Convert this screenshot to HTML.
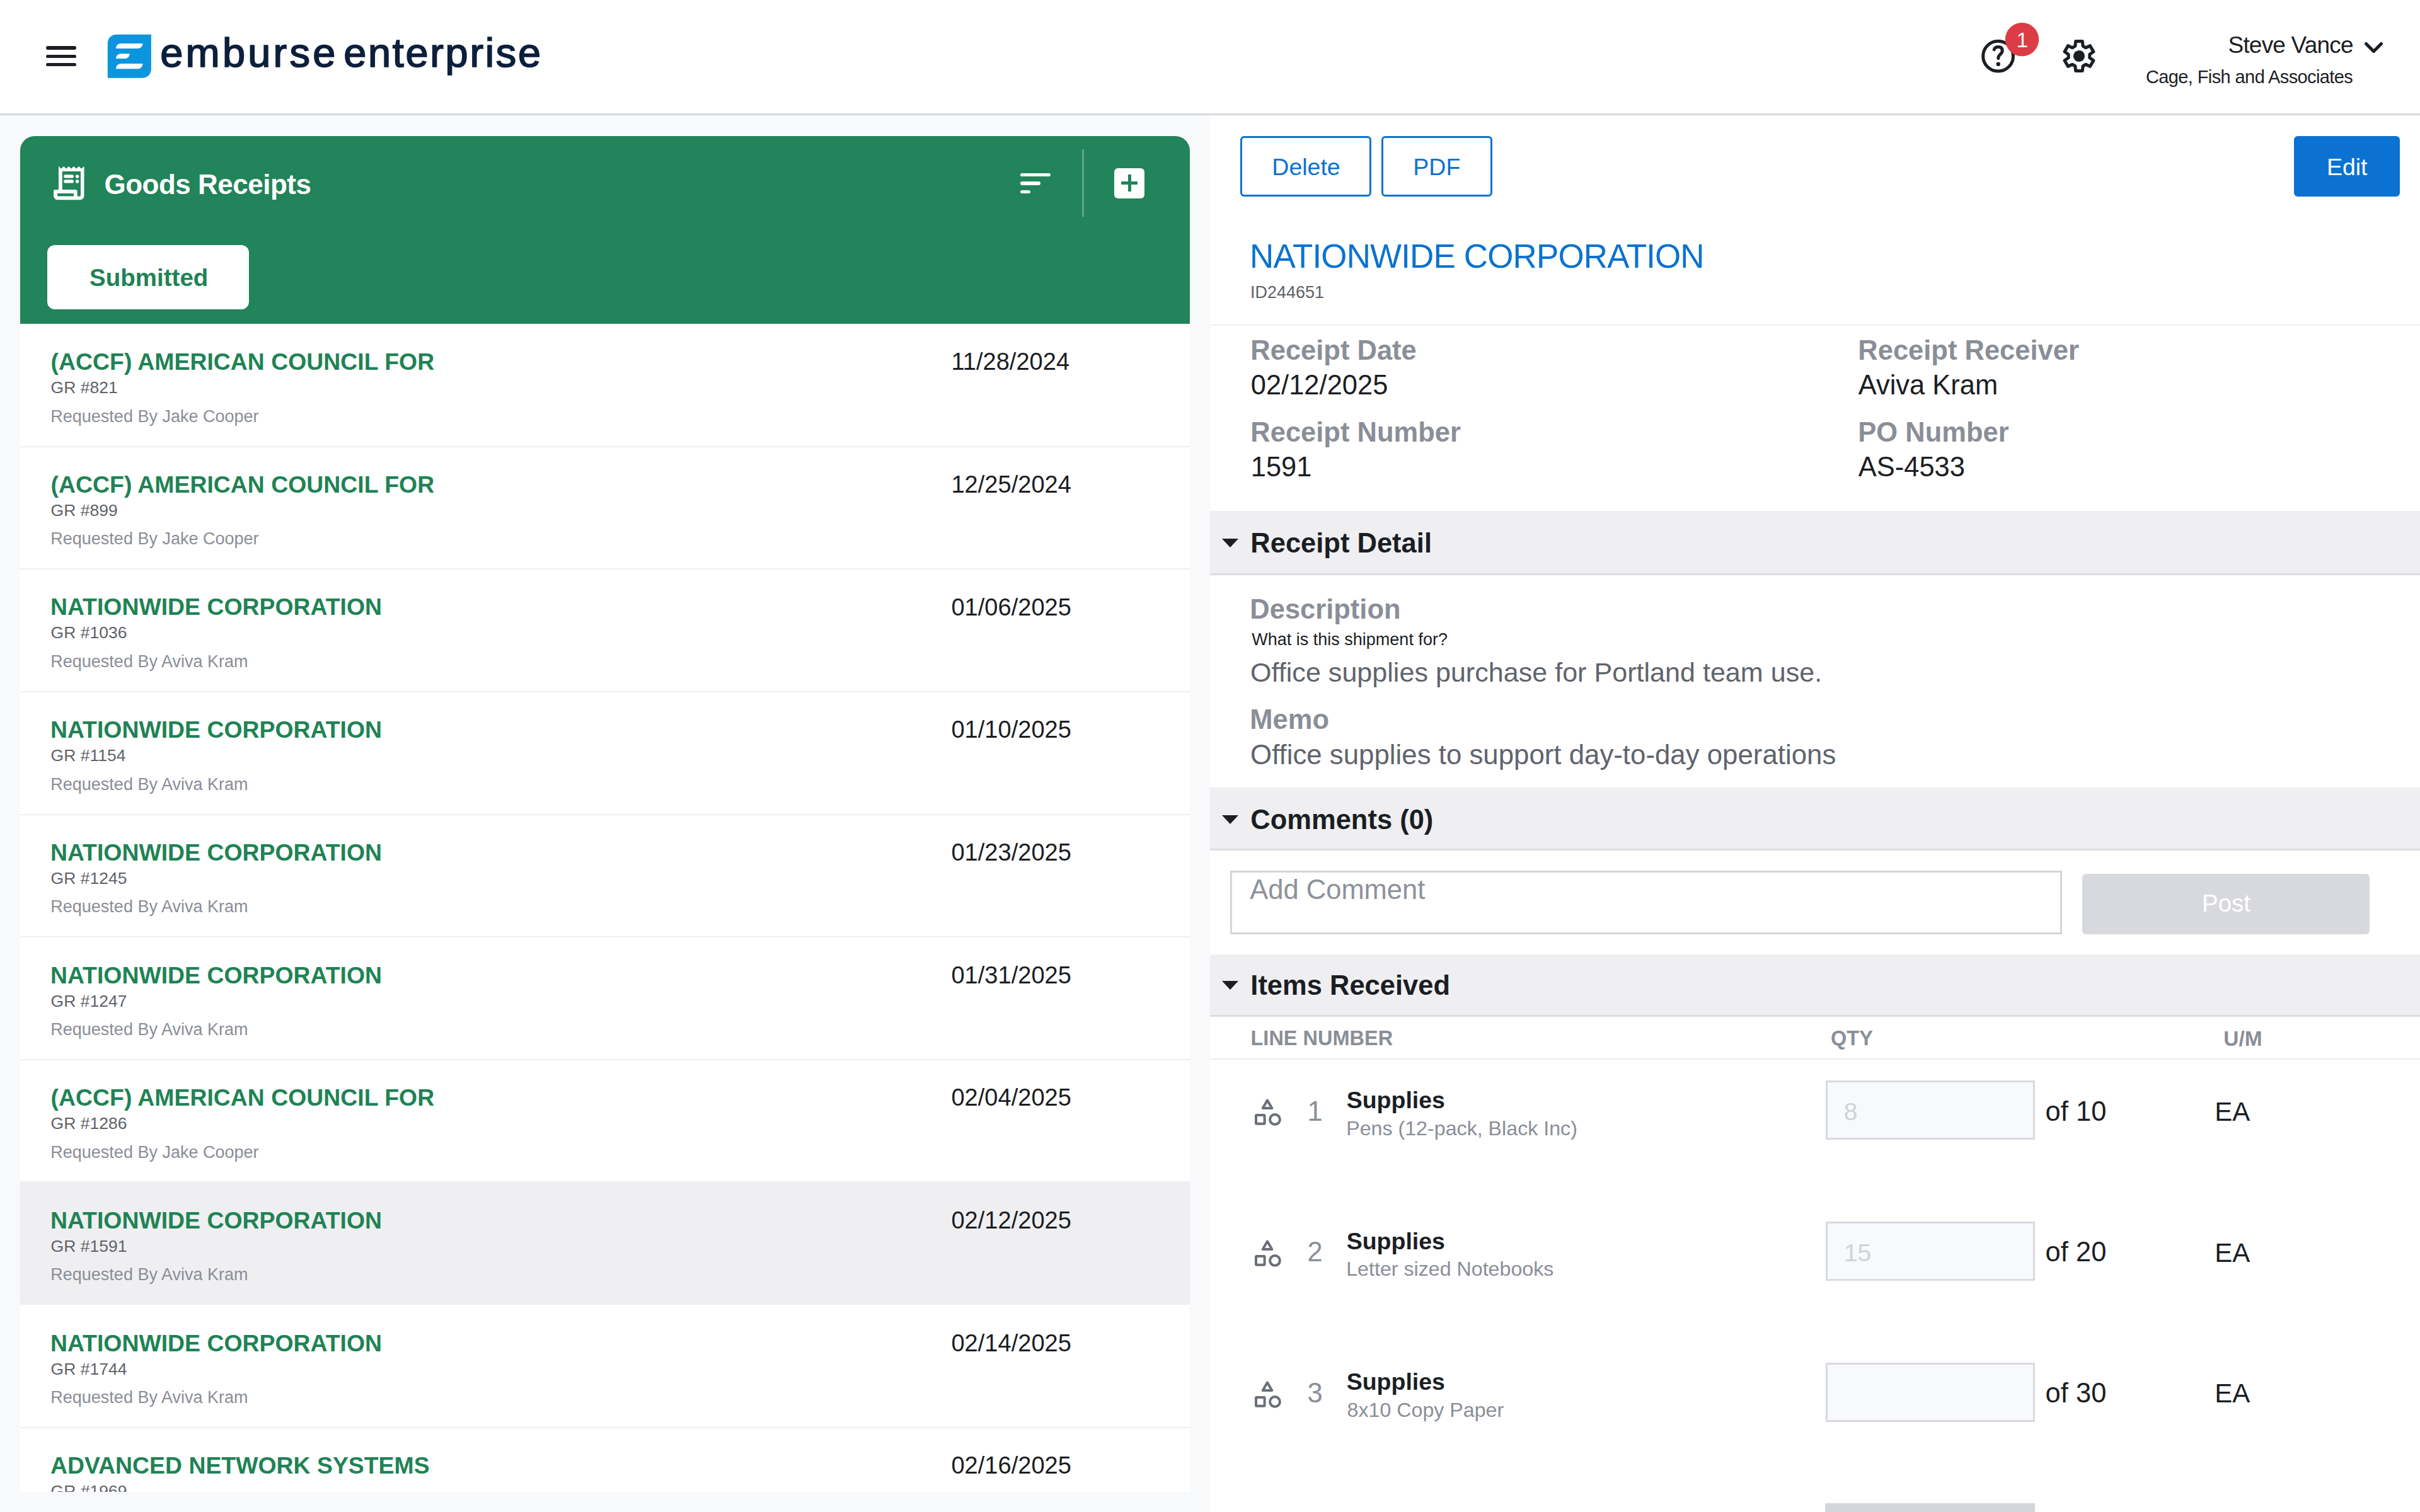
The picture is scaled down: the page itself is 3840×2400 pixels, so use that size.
<!DOCTYPE html>
<html><head><meta charset="utf-8"><title>Goods Receipts</title><style>
html,body{margin:0;padding:0}
body{width:3840px;height:2400px;position:relative;overflow:hidden;background:#f8f9fb;font-family:"Liberation Sans",sans-serif}
.t{position:absolute;line-height:1;white-space:nowrap}
#hdr{position:absolute;left:0;top:0;width:3840px;height:180px;background:#fff;border-bottom:3px solid #d7d9de}
.ham{position:absolute;left:73.3px;width:48px;height:5.3px;border-radius:3px;background:#1b1e23}
#green{position:absolute;left:32px;top:216px;width:1856px;height:298.6px;background:#21845a;border-radius:23px 23px 0 0}
.fl{position:absolute;height:5.6px;border-radius:3px;background:#fff}
#subbtn{position:absolute;left:74.6px;top:389px;width:320px;height:101.6px;border-radius:12px;background:#fff}
#list{position:absolute;left:32px;top:514px;width:1856px;height:1854px;background:#fff;overflow:hidden}
.sep{position:absolute;left:0;width:1856px;height:2px;background:#eeeff1}
#right{position:absolute;left:1920px;top:183px;width:1920px;height:2217px;background:#fff}
.obtn{position:absolute;top:216px;height:96px;box-sizing:border-box;border:3px solid #0b72d1;border-radius:6px}
.sec{position:absolute;left:1920px;width:1920px;box-sizing:border-box;background:#efeff2;border-bottom:3px solid #dcdde2}
.inp{position:absolute;left:2896.6px;width:332px;height:94.2px;box-sizing:border-box;border:3px solid #d9dadf;background:#f8f9fb}
</style></head>
<body>
<div id="hdr"></div><div class="ham" style="top:73.3px"></div><div class="ham" style="top:86.8px"></div><div class="ham" style="top:100.0px"></div><svg style="position:absolute;left:170px;top:54px" width="71" height="71" viewBox="0 0 71 71">
<path d="M0.8,15.5 C0.8,6.5 6.5,0.8 15.5,0.8 H69.9 V55 C69.9,64 64,69.8 55,69.8 H0.8 Z" fill="#0c95de"/>
<path d="M14,23 C14,18.2 17.4,15 22.4,15 H56.4 C56.4,19.6 53,23 48.4,23 Z" fill="#fff"/>
<path d="M14,39.1 C14,34.4 17.4,31.2 22.4,31.2 H35.7 C35.7,35.7 32.3,39.1 27.8,39.1 Z" fill="#fff"/>
<path d="M14,55.3 C14,50.4 17.4,47 22.4,47 H56.4 C56.4,51.7 53,55.3 48.4,55.3 Z" fill="#fff"/>
</svg><div class="t" style="left:254.2px;top:51.3px;font-size:65px;color:#0c1f3c;letter-spacing:4.2px;-webkit-text-stroke:1.7px #0c1f3c;">emburse</div>
<div class="t" style="left:545.2px;top:51.3px;font-size:65px;color:#0c1f3c;letter-spacing:2.65px;-webkit-text-stroke:1.7px #0c1f3c;">enterprise</div>
<svg style="position:absolute;left:3140px;top:30px" width="100" height="90" viewBox="3140 30 100 90">
<circle cx="3170.6" cy="89.2" r="23.9" fill="none" stroke="#1b1e23" stroke-width="5"/>
<path d="M3164.3,78.6 Q3165.5,74.6 3170.8,74.6 Q3177.2,74.6 3177.2,80.5 Q3177.2,83.6 3173.4,86.8 Q3170.8,89.2 3170.8,92.6" fill="none" stroke="#1b1e23" stroke-width="5" stroke-linecap="round"/>
<circle cx="3170.8" cy="101.8" r="3.2" fill="#1b1e23"/>
<circle cx="3208.5" cy="62.6" r="26.7" fill="#dc3c45"/>
</svg><div class="t" style="left:3199.7px;top:47.4px;font-size:33px;color:#fff;">1</div>
<svg style="position:absolute;left:3270px;top:60px" width="58" height="58" viewBox="-29 -29 58 58">
<path id="gear" d="M-6.09,-15.87 L-5.40,-23.38 L5.40,-23.38 L6.09,-15.87 L10.70,-13.21 L17.55,-16.37 L22.95,-7.02 L16.79,-2.66 L16.79,2.66 L22.95,7.02 L17.55,16.37 L10.70,13.21 L6.09,15.87 L5.40,23.38 L-5.40,23.38 L-6.09,15.87 L-10.70,13.21 L-17.55,16.37 L-22.95,7.02 L-16.79,2.66 L-16.79,-2.66 L-22.95,-7.02 L-17.55,-16.37 L-10.70,-13.21 Z" fill="none" stroke="#1b1e23" stroke-width="5" stroke-linejoin="round"/>
<circle cx="0" cy="0" r="9.1" fill="#1b1e23"/>
</svg><div class="t" style="left:3535.5px;top:52.5px;font-size:37px;color:#1b1e23;letter-spacing:-0.8px;">Steve Vance</div>
<svg style="position:absolute;left:3748px;top:62px" width="38" height="26" viewBox="0 0 38 26"><path d="M6.5,7.5 L18.5,19.5 L30.5,7.5" fill="none" stroke="#1b1e23" stroke-width="5.2" stroke-linecap="round" stroke-linejoin="round"/></svg><div class="t" style="left:3404.9px;top:107.8px;font-size:29px;color:#1b1e23;letter-spacing:-0.6px;">Cage, Fish and Associates</div>
<div id="green"></div><svg style="position:absolute;left:70px;top:250px" width="80" height="80" viewBox="0 0 80 80">
<path fill="#fff" fill-rule="evenodd" d="M23,14 L27,17.8 L31,14 L35,17.8 L39,14 L43,17.8 L47,14 L51,17.8 L55,14 L59,17.8 L63.5,14 V60 Q63.5,67.2 56.3,67.2 H22 Q15,67.2 15,60 V54 Q15,51 18,51 H23 Z
M28.8,22 H58 V59.2 Q58,61.8 55.3,61.8 Q52.6,61.8 52.6,59.2 V54 Q52.6,51 49.6,51 H28.8 Z
M21,56.9 H47 V61.6 H23 Q21,61.6 21,59.6 Z"/>
<rect x="31.2" y="27.2" width="15.8" height="5.3" rx="2.65" fill="#fff"/>
<rect x="31.2" y="35.2" width="15.8" height="5.4" rx="2.7" fill="#fff"/>
<circle cx="52.6" cy="29.9" r="2.75" fill="#fff"/>
<circle cx="52.6" cy="37.9" r="2.75" fill="#fff"/>
</svg><div class="t" style="left:165.5px;top:270.6px;font-size:44px;font-weight:700;color:#fff;letter-spacing:-0.5px;">Goods Receipts</div>
<div class="fl" style="left:1619px;top:274.5px;width:48px"></div><div class="fl" style="left:1619px;top:288px;width:32px"></div><div class="fl" style="left:1619px;top:301.5px;width:16px"></div><div style="position:absolute;left:1717px;top:237px;width:3px;height:107px;background:rgba(255,255,255,0.28)"></div><div style="position:absolute;left:1768px;top:266.5px;width:48px;height:48.5px;border-radius:6px;background:#fff"></div><div style="position:absolute;left:1778.7px;top:288px;width:26.5px;height:5.2px;background:#21845a"></div><div style="position:absolute;left:1789.6px;top:277.3px;width:5.3px;height:26.7px;background:#21845a"></div><div id="subbtn"></div><div class="t" style="left:142.1px;top:422.0px;font-size:38.5px;font-weight:700;color:#1f8354;">Submitted</div>
<div id="list"><div class="sep" style="top:193.5px"></div><div class="t" style="left:48.6px;top:42.0px;font-size:37.4px;font-weight:700;color:#1f8354">(ACCF) AMERICAN COUNCIL FOR</div>
<div class="t" style="left:48.6px;top:88.0px;font-size:26.5px;color:#5e6269">GR #821</div>
<div class="t" style="left:48.3px;top:133.5px;font-size:27px;color:#8a8e96">Requested By Jake Cooper</div>
<div class="t" style="left:1477.4px;top:41.1px;font-size:38.1px;color:#1b1e23">11/28/2024</div>
<div class="sep" style="top:388.2px"></div><div class="t" style="left:48.6px;top:236.7px;font-size:37.4px;font-weight:700;color:#1f8354">(ACCF) AMERICAN COUNCIL FOR</div>
<div class="t" style="left:48.6px;top:282.7px;font-size:26.5px;color:#5e6269">GR #899</div>
<div class="t" style="left:48.3px;top:328.2px;font-size:27px;color:#8a8e96">Requested By Jake Cooper</div>
<div class="t" style="left:1477.4px;top:235.8px;font-size:38.1px;color:#1b1e23">12/25/2024</div>
<div class="sep" style="top:582.9px"></div><div class="t" style="left:47.9px;top:431.4px;font-size:37.4px;font-weight:700;color:#1f8354">NATIONWIDE CORPORATION</div>
<div class="t" style="left:48.6px;top:477.4px;font-size:26.5px;color:#5e6269">GR #1036</div>
<div class="t" style="left:48.3px;top:523.0px;font-size:27px;color:#8a8e96">Requested By Aviva Kram</div>
<div class="t" style="left:1477.4px;top:430.5px;font-size:38.1px;color:#1b1e23">01/06/2025</div>
<div class="sep" style="top:777.6px"></div><div class="t" style="left:47.9px;top:626.1px;font-size:37.4px;font-weight:700;color:#1f8354">NATIONWIDE CORPORATION</div>
<div class="t" style="left:48.6px;top:672.1px;font-size:26.5px;color:#5e6269">GR #1154</div>
<div class="t" style="left:48.3px;top:717.6px;font-size:27px;color:#8a8e96">Requested By Aviva Kram</div>
<div class="t" style="left:1477.4px;top:625.2px;font-size:38.1px;color:#1b1e23">01/10/2025</div>
<div class="sep" style="top:972.3px"></div><div class="t" style="left:47.9px;top:820.8px;font-size:37.4px;font-weight:700;color:#1f8354">NATIONWIDE CORPORATION</div>
<div class="t" style="left:48.6px;top:866.8px;font-size:26.5px;color:#5e6269">GR #1245</div>
<div class="t" style="left:48.3px;top:912.3px;font-size:27px;color:#8a8e96">Requested By Aviva Kram</div>
<div class="t" style="left:1477.4px;top:819.9px;font-size:38.1px;color:#1b1e23">01/23/2025</div>
<div class="sep" style="top:1167.0px"></div><div class="t" style="left:47.9px;top:1015.5px;font-size:37.4px;font-weight:700;color:#1f8354">NATIONWIDE CORPORATION</div>
<div class="t" style="left:48.6px;top:1061.5px;font-size:26.5px;color:#5e6269">GR #1247</div>
<div class="t" style="left:48.3px;top:1107.0px;font-size:27px;color:#8a8e96">Requested By Aviva Kram</div>
<div class="t" style="left:1477.4px;top:1014.6px;font-size:38.1px;color:#1b1e23">01/31/2025</div>
<div class="t" style="left:48.6px;top:1210.2px;font-size:37.4px;font-weight:700;color:#1f8354">(ACCF) AMERICAN COUNCIL FOR</div>
<div class="t" style="left:48.6px;top:1256.2px;font-size:26.5px;color:#5e6269">GR #1286</div>
<div class="t" style="left:48.3px;top:1301.7px;font-size:27px;color:#8a8e96">Requested By Jake Cooper</div>
<div class="t" style="left:1477.4px;top:1209.3px;font-size:38.1px;color:#1b1e23">02/04/2025</div>
<div style="position:absolute;left:0;top:1360.9px;width:1856px;height:196.5px;background:#efeff2"></div><div class="t" style="left:47.9px;top:1404.9px;font-size:37.4px;font-weight:700;color:#1f8354">NATIONWIDE CORPORATION</div>
<div class="t" style="left:48.6px;top:1450.9px;font-size:26.5px;color:#5e6269">GR #1591</div>
<div class="t" style="left:48.3px;top:1496.4px;font-size:27px;color:#8a8e96">Requested By Aviva Kram</div>
<div class="t" style="left:1477.4px;top:1404.0px;font-size:38.1px;color:#1b1e23">02/12/2025</div>
<div class="sep" style="top:1751.1px"></div><div class="t" style="left:47.9px;top:1599.6px;font-size:37.4px;font-weight:700;color:#1f8354">NATIONWIDE CORPORATION</div>
<div class="t" style="left:48.6px;top:1645.6px;font-size:26.5px;color:#5e6269">GR #1744</div>
<div class="t" style="left:48.3px;top:1691.2px;font-size:27px;color:#8a8e96">Requested By Aviva Kram</div>
<div class="t" style="left:1477.4px;top:1598.7px;font-size:38.1px;color:#1b1e23">02/14/2025</div>
<div class="t" style="left:47.9px;top:1794.3px;font-size:37.4px;font-weight:700;color:#1f8354">ADVANCED NETWORK SYSTEMS</div>
<div class="t" style="left:48.6px;top:1840.3px;font-size:26.5px;color:#5e6269">GR #1969</div>
<div class="t" style="left:48.3px;top:1885.9px;font-size:27px;color:#8a8e96">Requested By Aviva Kram</div>
<div class="t" style="left:1477.4px;top:1793.4px;font-size:38.1px;color:#1b1e23">02/16/2025</div>
</div><div id="right"></div><div class="obtn" style="left:1968px;width:208px"></div><div class="obtn" style="left:2192px;width:176px"></div><div class="t" style="left:2018.3px;top:247.1px;font-size:37.5px;color:#0b72d1;">Delete</div>
<div class="t" style="left:2242.3px;top:247.1px;font-size:37.5px;color:#0b72d1;">PDF</div>
<div style="position:absolute;left:3640px;top:216px;width:168px;height:96px;border-radius:6px;background:#0b72d1"></div><div class="t" style="left:3691.9px;top:246.7px;font-size:37.5px;color:#fff;">Edit</div>
<div class="t" style="left:1983.1px;top:379.9px;font-size:53px;color:#0b72d1;letter-spacing:-0.88px;">NATIONWIDE CORPORATION</div>
<div class="t" style="left:1983.9px;top:450.7px;font-size:27px;color:#5e6269;">ID244651</div>
<div style="position:absolute;left:1920px;top:515.3px;width:1920px;height:2px;background:#eeeff1"></div><div class="t" style="left:1984.3px;top:535.2px;font-size:43.5px;font-weight:700;color:#8a8e97;">Receipt Date</div>
<div class="t" style="left:1984.7px;top:590.4px;font-size:43.5px;color:#1b1e23;">02/12/2025</div>
<div class="t" style="left:1984.3px;top:665.0px;font-size:43.5px;font-weight:700;color:#8a8e97;">Receipt Number</div>
<div class="t" style="left:1984.7px;top:720.0px;font-size:43.5px;color:#1b1e23;">1591</div>
<div class="t" style="left:2948.3px;top:535.2px;font-size:43.5px;font-weight:700;color:#8a8e97;">Receipt Receiver</div>
<div class="t" style="left:2948.7px;top:590.4px;font-size:43.5px;color:#1b1e23;">Aviva Kram</div>
<div class="t" style="left:2948.3px;top:665.0px;font-size:43.5px;font-weight:700;color:#8a8e97;">PO Number</div>
<div class="t" style="left:2948.7px;top:720.0px;font-size:43.5px;color:#1b1e23;">AS-4533</div>
<div class="sec" style="top:811px;height:102px"></div><svg style="position:absolute;left:1938px;top:854px" width="28" height="16" viewBox="0 0 28 16"><path d="M1,1 H27 L14,15 Z" fill="#1b1e23"/></svg><div class="t" style="left:1984.3px;top:841.0px;font-size:43.5px;font-weight:700;color:#1b1e23;">Receipt Detail</div>
<div class="t" style="left:1983.3px;top:945.8px;font-size:43.5px;font-weight:700;color:#8a8e97;">Description</div>
<div class="t" style="left:1986.3px;top:1002.0px;font-size:27px;color:#1b1e23;">What is this shipment for?</div>
<div class="t" style="left:1984.1px;top:1046.2px;font-size:43.1px;color:#5f646c;">Office supplies purchase for Portland team use.</div>
<div class="t" style="left:1983.3px;top:1121.0px;font-size:43.5px;font-weight:700;color:#8a8e97;">Memo</div>
<div class="t" style="left:1984.1px;top:1175.8px;font-size:43.8px;color:#5f646c;">Office supplies to support day-to-day operations</div>
<div class="sec" style="top:1250px;height:100px"></div><svg style="position:absolute;left:1938px;top:1292.6px" width="28" height="16" viewBox="0 0 28 16"><path d="M1,1 H27 L14,15 Z" fill="#1b1e23"/></svg><div class="t" style="left:1984.3px;top:1279.6px;font-size:43.5px;font-weight:700;color:#1b1e23;">Comments (0)</div>
<div style="position:absolute;left:1952px;top:1381.5px;width:1320px;height:101px;box-sizing:border-box;border:3px solid #d3d5da;background:#fff"></div><div class="t" style="left:1983.3px;top:1390.8px;font-size:43.5px;color:#8e9299;">Add Comment</div>
<div style="position:absolute;left:3304px;top:1387px;width:456px;height:95.5px;border-radius:6px;background:#d8d9de"></div><div class="t" style="left:3494.0px;top:1415.3px;font-size:38.5px;color:#fff;">Post</div>
<div class="sec" style="top:1514.6px;height:99.40000000000009px"></div><svg style="position:absolute;left:1938px;top:1555.8px" width="28" height="16" viewBox="0 0 28 16"><path d="M1,1 H27 L14,15 Z" fill="#1b1e23"/></svg><div class="t" style="left:1984.3px;top:1542.8px;font-size:43.5px;font-weight:700;color:#1b1e23;">Items Received</div>
<div class="t" style="left:1984.5px;top:1632.2px;font-size:32.5px;font-weight:700;color:#8a8e97;">LINE NUMBER</div>
<div class="t" style="left:2905.0px;top:1632.4px;font-size:32.5px;font-weight:700;color:#8a8e97;">QTY</div>
<div class="t" style="left:3528.3px;top:1631.5px;font-size:33.5px;font-weight:700;color:#8a8e97;">U/M</div>
<div style="position:absolute;left:1920px;top:1679.5px;width:1920px;height:2.5px;background:#ebecef"></div><svg style="position:absolute;left:1988px;top:1742.0px" width="48" height="48" viewBox="0 0 48 48">
<path d="M23,4.5 L30.3,17 H15.7 Z" fill="none" stroke="#6b6f77" stroke-width="4" stroke-linejoin="round"/>
<rect x="5" y="28" width="13.6" height="13.8" rx="1" fill="none" stroke="#6b6f77" stroke-width="4"/>
<circle cx="35" cy="34.9" r="7.9" fill="none" stroke="#6b6f77" stroke-width="4"/>
</svg><div class="t" style="left:2074.5px;top:1742.5px;font-size:43.5px;color:#8a8e97;">1</div>
<div class="t" style="left:2136.7px;top:1727.8px;font-size:37.5px;font-weight:700;color:#1b1e23;">Supplies</div>
<div class="t" style="left:2136.2px;top:1774.6px;font-size:32.2px;color:#8a8e97;">Pens (12-pack, Black Inc)</div>
<div class="inp" style="top:1715.3px"></div><div class="t" style="left:2925.7px;top:1744.8px;font-size:39px;color:#d0d2d6;">8</div>
<div class="t" style="left:3245.6px;top:1742.5px;font-size:43.5px;color:#1b1e23;">of 10</div>
<div class="t" style="left:3514.3px;top:1743.8px;font-size:42px;color:#1b1e23;">EA</div>
<svg style="position:absolute;left:1988px;top:1965.8px" width="48" height="48" viewBox="0 0 48 48">
<path d="M23,4.5 L30.3,17 H15.7 Z" fill="none" stroke="#6b6f77" stroke-width="4" stroke-linejoin="round"/>
<rect x="5" y="28" width="13.6" height="13.8" rx="1" fill="none" stroke="#6b6f77" stroke-width="4"/>
<circle cx="35" cy="34.9" r="7.9" fill="none" stroke="#6b6f77" stroke-width="4"/>
</svg><div class="t" style="left:2074.4px;top:1966.3px;font-size:43.5px;color:#8a8e97;">2</div>
<div class="t" style="left:2136.7px;top:1951.6px;font-size:37.5px;font-weight:700;color:#1b1e23;">Supplies</div>
<div class="t" style="left:2136.2px;top:1998.4px;font-size:32.2px;color:#8a8e97;">Letter sized Notebooks</div>
<div class="inp" style="top:1939.1px"></div><div class="t" style="left:2925.9px;top:1968.5px;font-size:39px;color:#d0d2d6;">15</div>
<div class="t" style="left:3245.6px;top:1966.3px;font-size:43.5px;color:#1b1e23;">of 20</div>
<div class="t" style="left:3514.3px;top:1967.6px;font-size:42px;color:#1b1e23;">EA</div>
<svg style="position:absolute;left:1988px;top:2189.6px" width="48" height="48" viewBox="0 0 48 48">
<path d="M23,4.5 L30.3,17 H15.7 Z" fill="none" stroke="#6b6f77" stroke-width="4" stroke-linejoin="round"/>
<rect x="5" y="28" width="13.6" height="13.8" rx="1" fill="none" stroke="#6b6f77" stroke-width="4"/>
<circle cx="35" cy="34.9" r="7.9" fill="none" stroke="#6b6f77" stroke-width="4"/>
</svg><div class="t" style="left:2074.4px;top:2190.1px;font-size:43.5px;color:#8a8e97;">3</div>
<div class="t" style="left:2136.7px;top:2175.4px;font-size:37.5px;font-weight:700;color:#1b1e23;">Supplies</div>
<div class="t" style="left:2137.5px;top:2222.2px;font-size:32.2px;color:#8a8e97;">8x10 Copy Paper</div>
<div class="inp" style="top:2162.9px"></div><div class="t" style="left:3245.6px;top:2190.1px;font-size:43.5px;color:#1b1e23;">of 30</div>
<div class="t" style="left:3514.3px;top:2191.4px;font-size:42px;color:#1b1e23;">EA</div>
<div style="position:absolute;left:2896px;top:2386px;width:333px;height:14px;background:#d5d6db"></div>
</body></html>
